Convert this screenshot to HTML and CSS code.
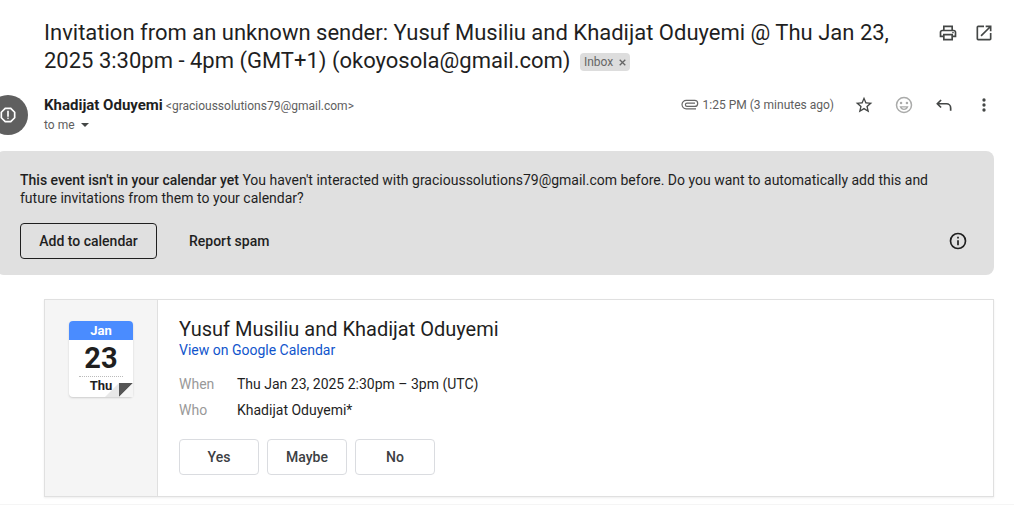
FILE: index.html
```html
<!DOCTYPE html>
<html lang="en">
<head>
<meta charset="utf-8">
<title>Invitation from an unknown sender</title>
<link rel="stylesheet" href="styles.css">
</head>
<body>
<main class="thread">
  <header class="subject">
    <h1 class="subject-title">Invitation from an unknown sender: Yusuf Musiliu and Khadijat Oduyemi @ Thu Jan 23, 2025 3:30pm - 4pm (GMT+1) (okoyosola@gmail.com) <span class="label">Inbox <button class="label-remove" type="button" aria-label="Remove label Inbox"><svg width="7" height="7" viewBox="0 0 7 7"><path d="M.7.7l5.6 5.6M6.3.7L.7 6.3" stroke="#666" stroke-width="1.3"/></svg></button></span></h1>
    <div class="subject-tools">
      <button class="icon-button" type="button" aria-label="Print all"><svg width="20" height="20" viewBox="0 0 24 24"><path fill="#444746" d="M19 8h-1V3H6v5H5c-1.660 0-3 1.340-3 3v6h4v4h12v-4h4v-6c0-1.660-1.340-3-3-3zM8 5h8v3H8V5zm8 12v2H8v-4h8v2zm2-2v-2H6v2H4v-4c0-.55.45-1 1-1h14c.55 0 1 .45 1 1v4h-2z"/><circle cx="18" cy="11.500" r="1" fill="#444746"/></svg></button>
      <button class="icon-button" type="button" aria-label="Open in new window"><svg width="20" height="20" viewBox="0 0 24 24"><path fill="#444746" d="M19 19H5V5h7V3H5a2 2 0 0 0-2 2v14a2 2 0 0 0 2 2h14c1.100 0 2-.9 2-2v-7h-2v7zM14 3v2h3.590l-9.830 9.830 1.410 1.410L19 6.410V10h2V3h-7z"/></svg></button>
    </div>
  </header>

  <section class="sender">
    <div class="avatar-cell">
      <div class="avatar"><svg width="20" height="20" viewBox="0 0 24 24"><path fill="#fff" d="M15.730 3H8.270L3 8.270v7.460L8.270 21h7.460L21 15.730V8.270L15.730 3zM19 14.900L14.900 19H9.100L5 14.900V9.100L9.100 5h5.800L19 9.100v5.800z"/><path fill="#fff" d="M11 7h2v7h-2z"/><circle cx="12" cy="16" r="1" fill="#fff"/></svg></div>
    </div>
    <div class="sender-info">
      <div class="sender-line"><span class="sender-name">Khadijat Oduyemi</span> <span class="sender-email">&lt;gracioussolutions79@gmail.com&gt;</span></div>
      <button class="recipient" type="button">to me <svg width="8" height="4" viewBox="0 0 8 4"><path fill="#444746" d="M0 0h8L4 4z"/></svg></button>
    </div>
    <div class="message-tools">
      <span class="sent"><svg width="18" height="12" viewBox="0 0 18 12"><path d="M15 9.800H5.200A4.200 4.200 0 0 1 5.200 1.400H13.700a3 3 0 0 1 0 6H6a1.500 1.500 0 0 1 0-3.200H14" fill="none" stroke="#666" stroke-width="1.200"/></svg><time>1:25 PM (3 minutes ago)</time></span>
      <button class="icon-button" type="button" aria-label="Star"><svg width="20" height="20" viewBox="0 0 24 24"><path fill="#444746" d="M22 9.240l-7.190-.62L12 2 9.190 8.630 2 9.240l5.460 4.730L5.820 21 12 17.270 18.180 21l-1.630-7.030L22 9.240zM12 15.400l-3.760 2.270 1-4.280-3.320-2.880 4.380-.38L12 6.100l1.710 4.040 4.380.38-3.320 2.880 1 4.280L12 15.400z"/></svg></button>
      <button class="icon-button" type="button" aria-label="Add reaction"><svg width="20" height="20" viewBox="0 0 24 24"><circle cx="12" cy="12" r="9" fill="none" stroke="#aaabaa" stroke-width="1.800"/><circle cx="8.500" cy="9.500" r="1.500" fill="#aaabaa"/><circle cx="15.500" cy="9.500" r="1.500" fill="#aaabaa"/><path fill="none" stroke="#aaabaa" stroke-width="1.600" d="M7.700 14.200h8.600c-.7 1.900-2.400 3-4.300 3s-3.600-1.100-4.300-3z"/></svg></button>
      <button class="icon-button" type="button" aria-label="Reply"><svg width="20" height="20" viewBox="0 0 24 24"><path fill="none" stroke="#444746" stroke-width="2" d="M8.500 6L4 10.500 8.500 15M4 10.500h11a5 5 0 0 1 5 5V19"/></svg></button>
      <button class="icon-button" type="button" aria-label="More"><svg width="20" height="20" viewBox="0 0 24 24" fill="#444746"><circle cx="12" cy="6" r="2"/><circle cx="12" cy="12" r="2"/><circle cx="12" cy="18" r="2"/></svg></button>
    </div>
  </section>

  <section class="notice">
    <p class="notice-text"><strong>This event isn't in your calendar yet</strong> You haven't interacted with gracioussolutions79@gmail.com before. Do you want to automatically add this and future invitations from them to your calendar?</p>
    <div class="notice-actions">
      <button class="notice-button outlined" type="button">Add to calendar</button>
      <button class="notice-button" type="button">Report spam</button>
      <button class="icon-button info" type="button" aria-label="More information"><svg width="20" height="20" viewBox="0 0 24 24"><circle cx="12" cy="12" r="9" fill="none" stroke="#1f1f1f" stroke-width="2"/><path fill="#1f1f1f" d="M11 11h2v6h-2zM11 7h2v2h-2z"/></svg></button>
    </div>
  </section>

  <article class="event">
    <div class="event-side">
      <div class="day-card">
        <div class="day-month">Jan</div>
        <div class="day-number">23</div>
        <div class="day-name">Thu</div>
        <svg class="day-fold" width="28" height="14" viewBox="0 0 28 14"><path fill="#e8e8e8" d="M14 0v14H0z"/><path fill="#555" d="M14 0h14L14 14z"/><path fill="#f5f5f5" d="M28 0v14H14z"/></svg>
      </div>
    </div>
    <div class="event-body">
      <h2 class="event-title">Yusuf Musiliu and Khadijat Oduyemi</h2>
      <a class="event-link" href="#">View on Google Calendar</a>
      <dl class="event-details">
        <dt>When</dt><dd>Thu Jan 23, 2025 2:30pm – 3pm (UTC)</dd>
        <dt>Who</dt><dd>Khadijat Oduyemi*</dd>
      </dl>
      <div class="replies">
        <button class="reply" type="button">Yes</button>
        <button class="reply" type="button">Maybe</button>
        <button class="reply" type="button">No</button>
      </div>
    </div>
  </article>
</main>
</body>
</html>
```
FILE: styles.css
```css
* { box-sizing: border-box; }
body {
  margin: 0;
  background: #fff;
  color: #1f1f1f;
  font: 14px/18px Roboto, "Open Sans", sans-serif;
  overflow-x: hidden;
}
h1, h2, p, dl, dd { margin: 0; font-weight: 400; }
button { font: inherit; color: inherit; background: none; border: 0; padding: 0; cursor: pointer; }
svg { display: block; flex: none; }
.thread { padding: 19px 20px 7px 0; border-bottom: 1px solid #f5f5f5; }
.icon-button { width: 20px; height: 20px; flex: none; }

.subject { display: flex; padding-left: 44px; gap: 32px; }
.subject-title { flex: 1; font-size: 22px; line-height: 28px; }
.subject-tools { display: flex; gap: 16px; padding-top: 4px; }
.label {
  display: inline-flex;
  align-items: center;
  gap: 6px;
  height: 18px;
  margin-left: 4px;
  padding: 0 4px;
  border-radius: 4px;
  background: #ddd;
  color: #666;
  font-size: 12px;
  line-height: 18px;
  vertical-align: 2px;
}

.sender { display: flex; padding-top: 20px; }
.avatar-cell { width: 44px; flex: none; }
.avatar {
  display: grid;
  place-items: center;
  width: 40px;
  height: 40px;
  margin-left: -12px;
  border-radius: 50%;
  background: #5f5f5f;
}
.sender-info { flex: 1; font-size: 12px; line-height: 20px; color: #5e5e5e; }
.sender-line { height: 20px; }
.sender-name { font-size: 15px; font-weight: 700; color: #1f1f1f; }
.recipient { display: flex; align-items: center; gap: 6px; line-height: 20px; }
.message-tools { display: flex; align-items: center; gap: 20px; height: 20px; }
.sent { display: flex; align-items: center; gap: 4px; font-size: 12px; color: #5e5e5e; }

.notice {
  margin: 16px 0 0 -4px;
  padding: 20px 26px 16px 24px;
  border-radius: 8px;
  background: #e0e0e0;
}
.notice-text strong { font-weight: 500; }
.notice-actions { display: flex; align-items: center; gap: 16px; padding-top: 16px; }
.notice-button { height: 36px; padding: 0 15px; border: 1px solid transparent; border-radius: 4px; font-weight: 500; }
.outlined { min-width: 137px; border-color: #1f1f1f; }
.info { margin-left: auto; }

.event {
  display: flex;
  margin: 24px 0 0 44px;
  border: 1px solid #e0e0e0;
  box-shadow: 0 1px 2px #eee;
}
.event-side { padding: 21px 24px; border-right: 1px solid #e0e0e0; background: #f5f5f5; }
.day-card {
  position: relative;
  width: 64px;
  padding-bottom: 2px;
  border-radius: 4px;
  background: #fff;
  box-shadow: 0 1px 2px #ccc;
  text-align: center;
  font-weight: 700;
}
.day-month { border-radius: 4px 4px 0 0; background: #4a8cff; color: #fff; font-size: 13px; line-height: 19px; }
.day-number { margin: 0 10px; border-bottom: 1px dotted #bbb; font-size: 29px; line-height: 36px; }
.day-name { font-size: 13px; line-height: 18px; }
.day-fold { position: absolute; right: 0; bottom: 0; }
.event-body { flex: 1; padding: 18px 21px 21px; }
.event-title { font-size: 20px; line-height: 22px; }
.event-link { color: #15c; text-decoration: none; line-height: 20px; }
.event-details { display: grid; grid-template-columns: 50px 1fr; gap: 8px; padding-top: 15px; }
.event-details dt { color: #999; }
.replies { display: flex; gap: 8px; padding-top: 20px; }
.reply { width: 80px; height: 36px; border: 1px solid #dadce0; border-radius: 4px; color: #3c4043; font-weight: 500; }
```
